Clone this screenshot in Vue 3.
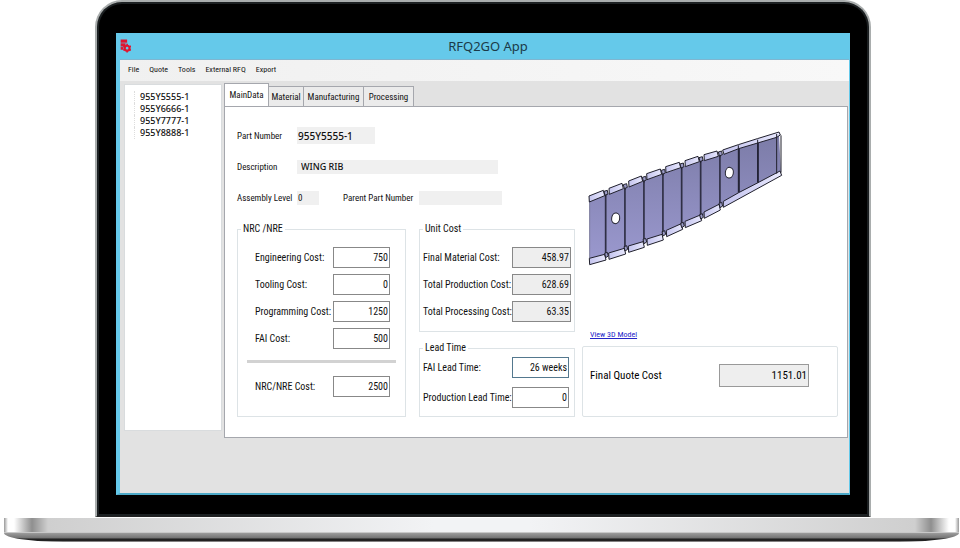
<script setup>
import { ref, reactive } from 'vue'

const menu = ['File', 'Quote', 'Tools', 'External RFQ', 'Export']
const parts = ['955Y5555-1', '955Y6666-1', '955Y7777-1', '955Y8888-1']
const tabs = ['MainData', 'Material', 'Manufacturing', 'Processing']
const activeTab = ref('MainData')

const part = reactive({ number: '955Y5555-1', description: 'WING RIB', level: '0', parent: '' })

const nrc = reactive([
  { id: 'engineering', label: 'Engineering Cost:', value: '750' },
  { id: 'tooling', label: 'Tooling Cost:', value: '0' },
  { id: 'programming', label: 'Programming Cost:', value: '1250' },
  { id: 'fai', label: 'FAI Cost:', value: '500' }
])
const nrcTotal = ref('2500')
const unit = reactive([
  { id: 'material', label: 'Final Material Cost:', value: '458.97' },
  { id: 'production', label: 'Total Production Cost:', value: '628.69' },
  { id: 'processing', label: 'Total Processing Cost:', value: '63.35' }
])
const lead = reactive([
  { id: 'fai-lead', label: 'FAI Lead Time:', value: '26 weeks' },
  { id: 'production-lead', label: 'Production Lead Time:', value: '0' }
])
const quote = ref('1151.01')

// Rib geometry: upper and lower flange tabs as [x1, y1, x2, y2], ribs as [x, top, bottom]
const upper = [
  [27, 228, 70, 211], [87, 205, 126, 190], [146, 183, 184, 168], [200, 161, 241, 147],
  [257, 140, 298, 127], [315, 122, 354, 109], [372, 104, 411, 93]
]
const lower = [
  [28, 415, 74, 403], [86, 399, 133, 385], [145, 378, 189, 365], [201, 357, 246, 343],
  [259, 331, 304, 311], [315, 304, 361, 285], [372, 276, 417, 253]
]
const ribs = [
  [77, 222, 408], [135, 202, 388], [192, 180, 366], [249, 159, 343],
  [305, 140, 318], [362, 121, 292], [420, 104, 258]
]
const flange = ([a, b, c, d], h) => `M${a} ${b}L${c} ${d}L${c + 4} ${d + h}L${a + 1} ${b + h + 2}Z`
</script>

<template>
  <div class="laptop">
    <div class="lid">
      <main class="app">
        <header class="titlebar">
          <svg class="logo" viewBox="0 0 20 26" aria-hidden="true">
            <path fill="#e01530" d="M1 1h12v6H1zM1 8h9v6H1zM1 15h5v5H1z" />
            <path stroke="#8c7a96" d="M4 7.5h9M1 14.5h6" />
            <circle cx="13" cy="17" r="4.5" fill="none" stroke="#e01530" stroke-width="4" />
            <path stroke="#e01530" stroke-width="3" d="M13 9v4M13 21v4M6 13l3 2M17 19l3 2M20 13l-3 2M9 19l-3 2" />
          </svg>
          <h1>RFQ2GO App</h1>
        </header>
        <nav class="menu">
          <button v-for="m in menu" :key="m" type="button">{{ m }}</button>
        </nav>
        <div class="work">
          <ul class="tree">
            <li v-for="p in parts" :key="p">{{ p }}</li>
          </ul>
          <section class="pane">
            <div class="tabs" role="tablist">
              <button
                v-for="t in tabs" :key="t" type="button" role="tab"
                :aria-selected="t === activeTab" :class="{ active: t === activeTab }"
                @click="activeTab = t"
              >{{ t }}</button>
            </div>
            <div class="sheet">
              <div class="details">
                <div class="line">
                  <label for="number">Part Number</label>
                  <input id="number" v-model="part.number" class="plain number">
                </div>
                <div class="line">
                  <label for="description">Description</label>
                  <input id="description" v-model="part.description" class="plain description">
                </div>
                <div class="line">
                  <label for="level">Assembly Level</label>
                  <input id="level" v-model="part.level" class="plain level">
                  <label for="parent" class="parent-label">Parent Part Number</label>
                  <input id="parent" v-model="part.parent" class="plain parent">
                </div>
                <div class="groups">
                  <fieldset class="nrc">
                    <legend>NRC /NRE</legend>
                    <div v-for="r in nrc" :key="r.id" class="row">
                      <label :for="r.id">{{ r.label }}</label>
                      <input :id="r.id" v-model="r.value">
                    </div>
                    <hr>
                    <div class="row">
                      <label for="nrc-total">NRC/NRE Cost:</label>
                      <input id="nrc-total" v-model="nrcTotal">
                    </div>
                  </fieldset>
                  <div class="stack">
                    <fieldset class="unit">
                      <legend>Unit Cost</legend>
                      <div v-for="r in unit" :key="r.id" class="row">
                        <label :for="r.id">{{ r.label }}</label>
                        <input :id="r.id" :value="r.value" readonly>
                      </div>
                    </fieldset>
                    <fieldset class="lead">
                      <legend>Lead Time</legend>
                      <div v-for="r in lead" :key="r.id" class="row">
                        <label :for="r.id">{{ r.label }}</label>
                        <input :id="r.id" v-model="r.value">
                      </div>
                    </fieldset>
                  </div>
                </div>
              </div>
              <div class="preview">
                <svg class="model" viewBox="6 0 624 450" role="img" aria-label="Wing rib">
                  <defs>
                    <linearGradient id="web" x1="0" y1="0" x2="0" y2="1">
                      <stop offset="0" stop-color="#7c7ca8" />
                      <stop offset="1" stop-color="#9a98ce" />
                    </linearGradient>
                    <linearGradient id="rim" x1="0" y1="0" x2="1" y2="0">
                      <stop offset="0" stop-color="#c4c4ee" />
                      <stop offset="1" stop-color="#e8e8fd" />
                    </linearGradient>
                  </defs>
                  <path
                    fill="url(#web)"
                    d="M29 240L77 224L135 204L192 182L249 161L305 142L362 122L420 104L597 45L603 160L430 250L420 258L362 292L305 318L249 343L192 366L135 388L77 408L30 418Z"
                  />
                  <path class="edge thin" d="M29 240V416" />
                  <path v-for="u in upper" :key="u[0]" class="edge" fill="url(#rim)" :d="flange(u, 16)" />
                  <path v-for="l in lower" :key="l[0]" class="edge" fill="url(#rim)" :d="flange(l, 17)" />
                  <path class="edge" fill="url(#rim)" d="M428 90L475 74L532 56L597 36L601 45L590 52L533 69L476 86L432 103Z" />
                  <path class="edge" fill="url(#rim)" d="M430 244L476 218L534 188L600 153L605 166L430 262Z" />
                  <g v-for="r in ribs" :key="r[0]">
                    <path class="rib" :d="`M${r[0]} ${r[1]}V${r[2]}`" />
                    <path class="glint" :d="`M${r[0] + 1} ${r[1] + 8}V${r[2] - 8}`" />
                    <path
                      class="edge" fill="#9c9cc8"
                      :d="`M${r[0] - 5} ${r[1] - 8}l10 -3l2 11l-9 4zM${r[0] - 3} ${r[2] - 8}l8 -3l3 11l-8 5z`"
                    />
                  </g>
                  <path class="edge" d="M475 76V218M533 59V188M590 42V161M603 46V158" />
                  <path class="rib" d="M477 86V216M534 69V187" />
                  <ellipse class="edge" fill="#fff" cx="107" cy="295" rx="12" ry="16" transform="rotate(8 107 295)" />
                  <ellipse class="edge" fill="#fff" cx="448" cy="158" rx="12" ry="16" transform="rotate(8 448 158)" />
                </svg>
                <a href="#model">View 3D Model</a>
                <div class="quote">
                  <label for="quote">Final Quote Cost</label>
                  <input id="quote" :value="quote" readonly>
                </div>
              </div>
            </div>
          </section>
        </div>
      </main>
    </div>
    <div class="deck"></div>
    <div class="foot"></div>
  </div>
</template>

<style>
body {
  background: #fff;
}
</style>

<style scoped>
.laptop {
  font-family: "Roboto Condensed", "Liberation Sans", sans-serif;
  font-size: 10px;
  line-height: 16px;
  color: #111;
}
.laptop * {
  box-sizing: border-box;
}
button,
input {
  font: inherit;
  color: inherit;
  margin: 0;
  border-radius: 0;
}
.lid {
  margin: 0 89px 0 95px;
  padding: 31px 19px 21px;
  background: #000;
  border: 2px solid #a9adad;
  border-bottom: 1px solid #222;
  border-radius: 27px 27px 0 0;
  box-shadow: inset 0 0 0 2px #1c2022;
}
.app {
  background: #e2e2e2;
  border-left: 4px solid #65c9ea;
  border-right: 1px solid #65c9ea;
  border-bottom: 2px solid #4da9c8;
}
.titlebar {
  display: flex;
  align-items: center;
  height: 27px;
  background: #65c9ea;
  border-bottom: 1px solid #7fb6d0;
}
.logo {
  width: 11px;
  height: 14px;
}
h1 {
  flex: 1;
  margin: 0 4px 0 0;
  font: 400 13px/18px "Noto Sans", sans-serif;
  text-align: center;
  color: #1b3b48;
}
.menu {
  display: flex;
  gap: 10px;
  padding: 2px 8px 3px;
  background: linear-gradient(90deg, #f0f0f0, #f8f8f8);
  font-size: 8px;
}
.menu button {
  padding: 0;
  border: 0;
  background: none;
}
.work {
  display: grid;
  grid-template-columns: 98px 1fr;
  align-items: start;
  gap: 2px;
  padding: 3px 1px 55px 4px;
}
.tree {
  margin: 0;
  padding: 6px 9px;
  min-height: 347px;
  list-style: none;
  background: #fff;
  border: 1px solid #d9dcde;
  font: 500 9px/12px "Noto Sans", sans-serif;
}
.tree li {
  padding-left: 5px;
  border-left: 1px dotted #ddd;
}
.tabs {
  display: grid;
  grid-template-columns: 45px 35px 60px 50px;
  align-items: end;
  font-size: 9px;
}
.tabs button {
  height: 20px;
  padding: 0;
  border: 1px solid #a5a7ad;
  border-left-width: 0;
  border-bottom: 0;
  background: #ebebeb;
}
.tabs .active {
  height: 23px;
  margin-top: -1px;
  border-left-width: 1px;
  background: #fff;
}
.sheet {
  display: grid;
  grid-template-columns: 338px 1fr;
  gap: 7px;
  padding: 13px 9px 20px 12px;
  background: #fff;
  border: 1px solid #a5a7ad;
}
.line {
  display: flex;
  align-items: center;
  height: 31px;
  font-size: 9px;
}
.line label {
  width: 60px;
  white-space: nowrap;
}
.plain {
  height: 14px;
  padding: 0 1px;
  border: 0;
  background: #f0f0f0;
}
.number {
  width: 78px;
  height: 17px;
  font: 500 10px/16px "Noto Sans", sans-serif;
}
.description {
  width: 201px;
  padding-left: 4px;
  font: 500 9px/14px "Noto Sans", sans-serif;
}
.level {
  width: 22px;
}
.line .parent-label {
  width: 76px;
  margin-left: 24px;
}
.parent {
  width: 83px;
}
.groups {
  display: grid;
  grid-template-columns: 169px 156px;
  gap: 13px;
  margin-top: 8px;
}
fieldset {
  min-width: 0;
  margin: 0;
  padding: 10px 3px 9px;
  border: 1px solid #dde3e6;
}
legend {
  padding: 0 2px;
}
.nrc {
  padding: 10px 15px 19px 17px;
}
.nrc legend {
  margin-left: -14px;
}
.lead {
  padding: 1px 5px 8px 3px;
}
.stack {
  display: grid;
  gap: 8px;
}
.row {
  display: flex;
  align-items: center;
  justify-content: space-between;
  white-space: nowrap;
}
.row + .row {
  margin-top: 6px;
}
.lead .row + .row {
  margin-top: 9px;
}
.row input {
  width: 57px;
  min-width: 0;
  height: 21px;
  padding: 0 1px;
  border: 1px solid #888;
  background: #fff;
  text-align: right;
}
.unit .row input {
  width: 59px;
  background: #eee;
}
.lead .row:first-of-type input {
  border-color: #54788e;
}
hr {
  height: 3px;
  margin: 11px -6px 13px -8px;
  border: 0;
  background: #d2d2d2;
}
.preview {
  display: flex;
  flex-direction: column;
  align-items: start;
}
.model {
  width: 208px;
  height: 150px;
}
.edge {
  stroke: #20202c;
  stroke-width: 3;
  stroke-linejoin: round;
}
.thin {
  stroke: #77779a;
}
.rib {
  stroke: #222235;
  stroke-width: 5;
}
.glint {
  stroke: #77779c;
  stroke-width: 1;
}
.preview a {
  margin: auto 8px 3px;
  font-size: 8px;
  color: #2424c8;
}
.quote {
  display: flex;
  align-items: center;
  justify-content: space-between;
  width: 100%;
  min-height: 71px;
  padding: 0 28px 12px 7px;
  border: 1px solid #dde3e6;
  border-radius: 2px;
  font-size: 11px;
  color: #000;
}
.quote input {
  width: 90px;
  height: 23px;
  padding: 0 1px;
  border: 1px solid #999;
  background: #eee;
  text-align: right;
}
.deck {
  height: 16px;
  margin: 0 1px 0 4px;
  border-top: 1px solid #fff;
  border-bottom: 1px solid #c8c8c8;
  background: linear-gradient(90deg, #999 0, #fff 4px, #fff 10px, #8f8f8f 28px, #cfcfcf 44px, #f2f3f5 45%, #f2f3f5 55%, #cfcfcf calc(100% - 44px), #8f8f8f calc(100% - 28px), #fff calc(100% - 10px), #fff calc(100% - 4px), #999 100%);
}
.foot {
  height: 9px;
  margin: 0 1px 0 4px;
  border-radius: 0 0 60px 60px / 0 0 9px 9px;
  background: linear-gradient(#9c9c9c, #777 50%, #222 70%, #222 85%, #bbb);
}
</style>
